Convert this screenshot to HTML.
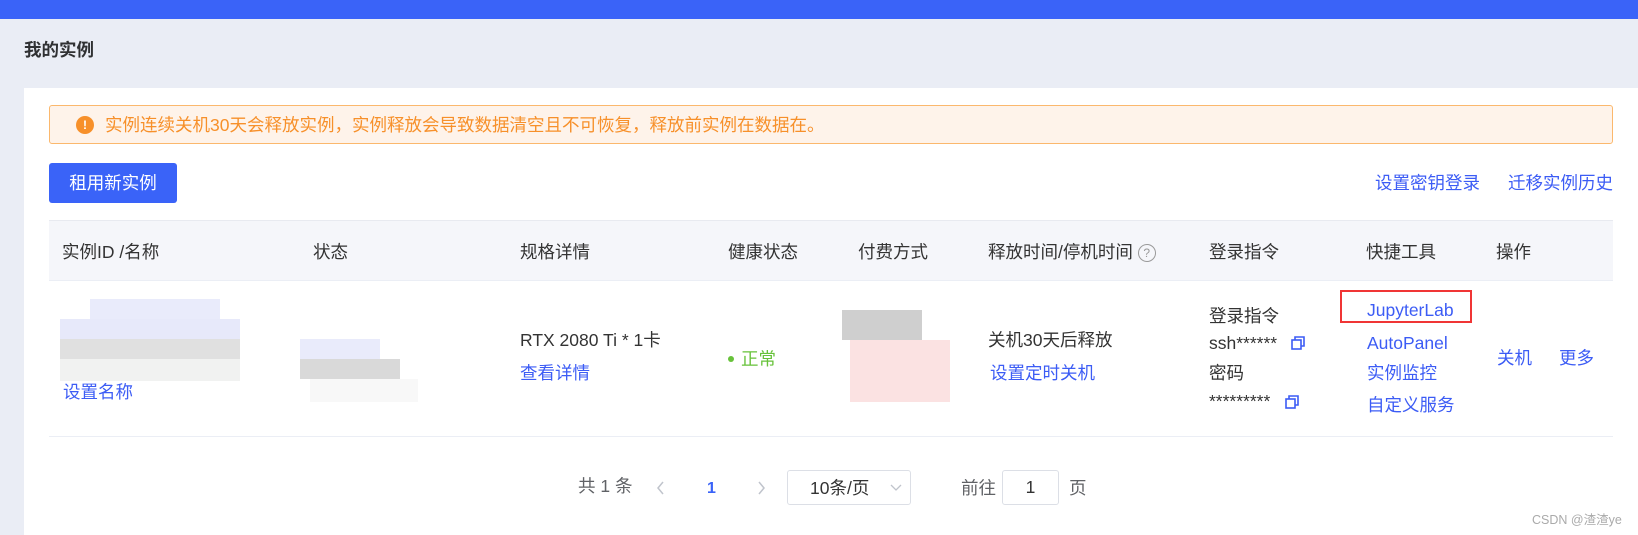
<!DOCTYPE html>
<html><head><meta charset="utf-8"><style>
*{margin:0;padding:0;box-sizing:border-box}
body{width:1638px;height:535px;overflow:hidden;background:#eaedf5;font-family:"Liberation Sans","Noto Sans CJK SC",sans-serif;font-size:17.5px;color:#333;position:relative}
.a{position:absolute;white-space:nowrap;line-height:20px}
.b{color:#3c5cf5}
.h{color:#333}
</style></head><body>
<div class="a" style="left:0;top:0;width:1638px;height:19px;background:#3a63f8"></div>
<div class="a" style="left:24px;top:40px;font-weight:bold;color:#303133">我的实例</div>
<div class="a" style="left:24px;top:88px;width:1614px;height:447px;background:#fff"></div>
<div class="a" style="left:49px;top:105px;width:1564px;height:39px;background:#fef3ea;border:1px solid #fbb86d;border-radius:3px"></div>
<div class="a" style="left:76px;top:116px;width:18px;height:18px;border-radius:50%;background:#f7902a;color:#fff;font-size:12px;font-weight:bold;text-align:center;line-height:18px">!</div>
<div class="a" style="left:105px;top:115px;color:#f7902a">实例连续关机30天会释放实例，实例释放会导致数据清空且不可恢复，释放前实例在数据在。</div>
<div class="a" style="left:49px;top:163px;width:128px;height:40px;background:#3a63f8;border-radius:3px;color:#fff;text-align:center;line-height:40px">租用新实例</div>
<div class="a b" style="left:1375px;top:173px">设置密钥登录</div>
<div class="a b" style="left:1508px;top:173px">迁移实例历史</div>
<div class="a" style="left:49px;top:220px;width:1564px;height:61px;background:#f5f6fa;border-top:1px solid #e8eaf0;border-bottom:1px solid #ebeef5"></div>
<div class="a h" style="left:62px;top:242px">实例ID /名称</div>
<div class="a h" style="left:313px;top:242px">状态</div>
<div class="a h" style="left:520px;top:242px">规格详情</div>
<div class="a h" style="left:728px;top:242px">健康状态</div>
<div class="a h" style="left:858px;top:242px">付费方式</div>
<div class="a h" style="left:988px;top:242px">释放时间/停机时间 <span style="display:inline-block;width:18px;height:18px;border:1px solid #999;border-radius:50%;font-size:12px;color:#999;text-align:center;line-height:16px;vertical-align:1px">?</span></div>
<div class="a h" style="left:1209px;top:242px">登录指令</div>
<div class="a h" style="left:1366px;top:242px">快捷工具</div>
<div class="a h" style="left:1496px;top:242px">操作</div>
<div class="a" style="left:49px;top:436px;width:1564px;height:1px;background:#ebeef5"></div>
<!-- blobs -->
<div class="a" style="left:90px;top:299px;width:130px;height:40px;background:#e9ebfb"></div>
<div class="a" style="left:60px;top:319px;width:180px;height:20px;background:#e7e9fa"></div>
<div class="a" style="left:60px;top:339px;width:180px;height:20px;background:#e0e0e0"></div>
<div class="a" style="left:60px;top:359px;width:180px;height:22px;background:#f1f2f1"></div>
<div class="a" style="left:300px;top:339px;width:80px;height:20px;background:#e9ebfb"></div>
<div class="a" style="left:300px;top:359px;width:100px;height:20px;background:#d9d9d9"></div>
<div class="a" style="left:310px;top:379px;width:108px;height:23px;background:#f8f8f8"></div>
<div class="a" style="left:842px;top:310px;width:80px;height:30px;background:#cfcfcf"></div>
<div class="a" style="left:850px;top:340px;width:100px;height:62px;background:#fbe2e2"></div>
<div class="a b" style="left:63px;top:382px">设置名称</div>
<div class="a h" style="left:520px;top:330px">RTX 2080 Ti * 1卡</div>
<div class="a b" style="left:520px;top:363px">查看详情</div>
<div class="a" style="left:728px;top:356px;width:6px;height:6px;border-radius:50%;background:#67c23a"></div>
<div class="a" style="left:741px;top:349px;color:#67c23a">正常</div>
<div class="a h" style="left:988px;top:330px">关机30天后释放</div>
<div class="a b" style="left:990px;top:363px">设置定时关机</div>
<div class="a h" style="left:1209px;top:306px">登录指令</div>
<div class="a h" style="left:1209px;top:333px">ssh******</div>
<div class="a h" style="left:1209px;top:363px">密码</div>
<div class="a h" style="left:1209px;top:391px">*********</div>
<svg class="a" style="left:1291px;top:336px" width="15" height="15" viewBox="0 0 15 15" fill="none" stroke="#3c5cf5" stroke-width="1.6"><rect x="1" y="4" width="9" height="9"/><path d="M4 4V1h9v9h-3"/></svg>
<svg class="a" style="left:1285px;top:395px" width="15" height="15" viewBox="0 0 15 15" fill="none" stroke="#3c5cf5" stroke-width="1.6"><rect x="1" y="4" width="9" height="9"/><path d="M4 4V1h9v9h-3"/></svg>
<div class="a" style="left:1340px;top:290px;width:132px;height:33px;border:2px solid #f03535"></div>
<div class="a b" style="left:1367px;top:300px">JupyterLab</div>
<div class="a b" style="left:1367px;top:333px">AutoPanel</div>
<div class="a b" style="left:1367px;top:363px">实例监控</div>
<div class="a b" style="left:1367px;top:395px">自定义服务</div>
<div class="a b" style="left:1497px;top:348px">关机</div>
<div class="a b" style="left:1559px;top:348px">更多</div>
<!-- pagination -->
<div class="a" style="left:578px;top:476px;color:#606266">共 1 条</div>
<svg class="a" style="left:656px;top:480px" width="10" height="16" viewBox="0 0 10 16" fill="none" stroke="#c0c4cc" stroke-width="1.5"><path d="M7 2L2 8l5 6"/></svg>
<div class="a" style="left:707px;top:479px;color:#3a63f8;font-weight:bold;font-size:16px">1</div>
<svg class="a" style="left:756px;top:480px" width="10" height="16" viewBox="0 0 10 16" fill="none" stroke="#c0c4cc" stroke-width="1.5"><path d="M3 2l5 6-5 6"/></svg>
<div class="a" style="left:787px;top:470px;width:124px;height:35px;border:1px solid #dcdfe6;border-radius:3px"></div>
<div class="a h" style="left:810px;top:478px">10条/页</div>
<svg class="a" style="left:890px;top:484px" width="12" height="8" viewBox="0 0 12 8" fill="none" stroke="#c0c4cc" stroke-width="1.3"><path d="M1 1l5 5 5-5"/></svg>
<div class="a" style="left:961px;top:478px;color:#606266">前往</div>
<div class="a" style="left:1002px;top:470px;width:57px;height:35px;border:1px solid #dcdfe6;border-radius:3px;text-align:center;line-height:33px">1</div>
<div class="a" style="left:1069px;top:478px;color:#606266">页</div>
<div class="a" style="left:1532px;top:510px;color:#aaa;font-size:12.5px">CSDN @渣渣ye</div>
</body></html>
